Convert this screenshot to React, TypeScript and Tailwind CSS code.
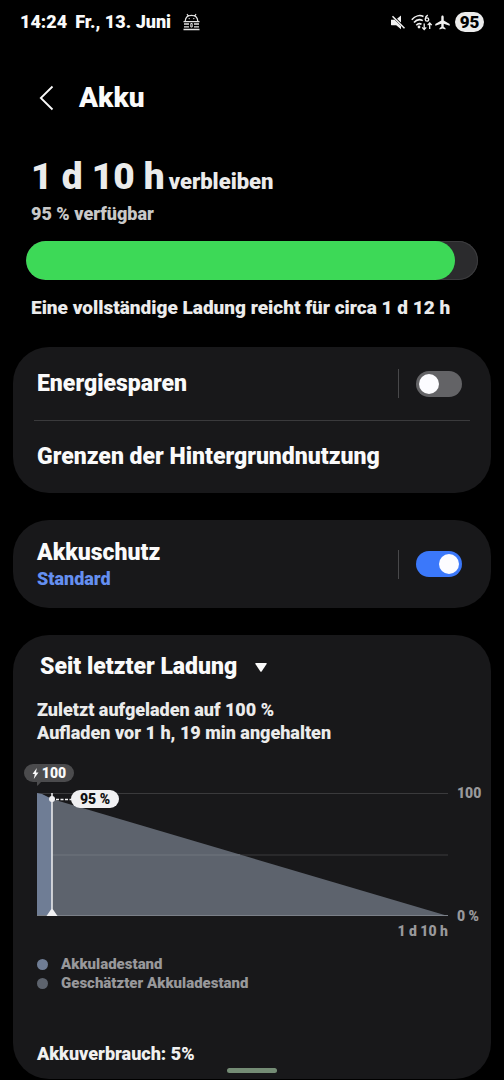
import { useState } from 'react';

type ToggleProps = {
  label: string;
  checked: boolean;
  onChange: (value: boolean) => void;
};

function Toggle({ label, checked, onChange }: ToggleProps) {
  return (
    <div className="flex items-center gap-[17px]">
      <span className="h-[29px] w-px bg-[#48484a]" />
      <label className="relative block h-[26px] w-[46px]">
        <input
          type="checkbox"
          role="switch"
          aria-label={label}
          checked={checked}
          onChange={(e) => onChange(e.target.checked)}
          className="peer block h-full w-full cursor-pointer appearance-none rounded-full bg-[#636366] checked:bg-[#3b78fa]"
        />
        <span className="pointer-events-none absolute left-[3px] top-[3px] h-5 w-5 rounded-full bg-[#fcfcff] peer-checked:left-[23px]" />
      </label>
    </div>
  );
}

function StatusBar() {
  return (
    <div className="flex h-11 items-center justify-between px-5 text-lg leading-5">
      <div className="flex items-center">
        <span>14:24</span>
        <span className="ml-2">Fr., 13. Juni</span>
        <svg className="ml-3" width="17" height="18" viewBox="0 0 17 18" fill="none" stroke="#e4e4e4">
          <path d="M2.2 8C2.5 4.2 5 2.3 8.500 2.300S14.500 4.200 14.800 8M4 1.200l1.200 1.800M13 1.200l-1.200 1.800" strokeWidth="1.200" />
          <path d="M.5 8.700h16M.5 16.500h16M1 11h5M11 11h5M1 13.800h5M11 13.800h5" strokeWidth="1.300" />
          <path d="M7.800 10.500h1.400v3.500H7.800z" strokeWidth="1" />
          <circle cx="6.200" cy="5.600" r=".7" fill="#e4e4e4" stroke="none" />
          <circle cx="10.800" cy="5.600" r=".7" fill="#e4e4e4" stroke="none" />
        </svg>
      </div>
      <div className="flex items-center">
        <svg width="14" height="15" viewBox="0 0 14 15" fill="#f2f2f2">
          <path d="M0 4.800h3.500L10 11v3.200L5.200 10.300H.5C.2 10.300 0 10.100 0 9.800zM10 .6v7L6 3.800z" />
          <path d="M1.500 1.200l12 12" stroke="#f2f2f2" strokeWidth="1.500" />
        </svg>
        <svg className="ml-[6px]" width="22" height="17" viewBox="0 0 22 17" fill="none" stroke="#f2f2f2" strokeWidth="1.600">
          <path d="M.8 5.700C4.200 1.600 9 .8 12.500 2.500M3 8.600c2.500-3 6-3.500 8.800-2M5.300 11.200c1.600-1.700 3.400-1.900 5.200-1" />
          <circle cx="8" cy="13" r="1.400" fill="#f2f2f2" stroke="none" />
          <path d="M16.800 1.200c-1.600.8-2.500 2.200-2.500 4" strokeWidth="1.300" />
          <circle cx="16" cy="5.500" r="1.700" strokeWidth="1.300" />
          <path d="M13.200 9.500v6M11.200 13.400l2 2.200 2-2.200M18.700 15V9M16.700 11.100l2-2.200 2 2.200" strokeWidth="1.300" />
        </svg>
        <svg className="ml-[2px]" width="15" height="15" viewBox="0 0 15 15" fill="#f2f2f2">
          <path d="M7.500.4c.8 0 1.200.6 1.200 1.500v3.500l6 3.700v1.600l-6-1.900v3l1.800 1.400v1.200l-3-.8-3 .8v-1.200l1.800-1.400v-3l-6 1.900V9.100l6-3.700V1.900c0-.9.400-1.500 1.200-1.500z" />
        </svg>
        <span className="ml-[5px] flex h-5 w-[29px] items-center justify-center rounded-full bg-[#ececec] text-[17px] leading-5 text-black">
          95
        </span>
      </div>
    </div>
  );
}

function BatteryChart() {
  return (
    <div className="mt-[49px] grid grid-cols-[1fr_43px]">
      <div className="relative h-[123px]">
        <svg className="block h-full w-full overflow-visible" viewBox="0 0 411 123" preserveAspectRatio="none">
          <path d="M0 .5h411M0 62h411" stroke="#3a3a3c" />
          <path d="M15 6L411 123H15z" fill="#5d636d" />
          <path d="M0 0L5 1 15 6V123H0z" fill="#6f7d95" />
          <path d="M15 62h188" stroke="#71767e" />
          <path d="M0 122.500h411" stroke="#7b8088" />
        </svg>
        <div className="absolute left-[3.65%] top-0 h-full">
          <svg className="block overflow-visible" width="20" height="123" viewBox="0 0 20 123">
            <path d="M0 0V123" stroke="#f0f0f2" strokeWidth="1.500" />
            <path d="M-5.500 123L-1 116.500Q0 115.500 1 116.500L5.500 123z" fill="#f0f0f2" />
            <circle cx="0" cy="6" r="3" fill="#f0f0f2" />
            <path d="M4 6.500H20" stroke="#f0f0f2" strokeWidth="1.500" strokeDasharray="3 1.500" />
          </svg>
          <span className="absolute left-[19px] top-[-3px] flex h-[18px] w-12 items-center justify-center whitespace-nowrap rounded-full bg-[#f0f0f2] text-sm leading-[18px] text-[#111]">
            95 %
          </span>
        </div>
        <span className="absolute left-[-13px] top-[-29px] flex h-[18px] w-[50px] items-center justify-center gap-[3px] rounded-full bg-[#4b4b4d] text-sm leading-[18px]">
          <svg width="7" height="11" viewBox="0 0 6 11" fill="#fafafa">
            <path d="M4.300 0L0 6h2.300L1.300 11 6 4.500H3.500z" />
          </svg>
          100
        </span>
        <svg className="absolute left-0 top-[-12px]" width="5" height="5" viewBox="0 0 5 5" fill="#4b4b4d">
          <path d="M0 0h5L.8 4.500Q0 5 0 4z" />
        </svg>
      </div>
      <div className="-my-[10px] flex flex-col justify-between pl-[9px] text-sm leading-5 text-[#98989b]">
        <span>100</span>
        <span className="whitespace-nowrap">0 %</span>
      </div>
      <div className="mt-[5px] text-right text-sm leading-5 text-[#98989b]">1 d 10 h</div>
    </div>
  );
}

export default function App() {
  const [powerSaving, setPowerSaving] = useState(false);
  const [protection, setProtection] = useState(true);
  const level = 95;

  return (
    <div className="min-h-screen bg-black font-['Roboto','Liberation_Sans',sans-serif] font-black text-[#fafafa]">
      <StatusBar />

      <header className="flex h-[108px] items-center pl-[39px]">
        <button type="button" aria-label="Zurück" className="cursor-pointer">
          <svg className="block" width="16" height="26" viewBox="0 0 16 26" fill="none" stroke="#fafafa" strokeWidth="1.800">
            <path d="M13.500 1.500L1.800 13l11.700 11.500" />
          </svg>
        </button>
        <h1 className="ml-6 text-[28px] leading-8">Akku</h1>
      </header>

      <main className="px-[13px]">
        <section>
          <div className="px-[18px] text-[#ebebeb]">
            <p className="flex items-baseline gap-1 whitespace-nowrap">
              <span className="text-[37px] leading-[50px]">1 d 10 h</span>
              <span className="text-[22px] leading-6">verbleiben</span>
            </p>
            <p className="text-lg leading-6 text-[#c8c8c8]">{level} % verfügbar</p>
          </div>
          <div
            role="progressbar"
            aria-label="Akkuladestand"
            aria-valuenow={level}
            className="mx-[13px] mt-[15px] h-[39px] overflow-hidden rounded-full bg-[#2b2b2d] ring-1 ring-inset ring-[#3c3c3e]"
          >
            <div className="h-full rounded-full bg-[#3dd957]" style={{ width: `${level}%` }} />
          </div>
          <p className="mt-4 pl-[18px] text-[19px] leading-6 text-[#ebebeb]">
            Eine vollständige Ladung reicht für circa 1 d 12 h
          </p>
        </section>

        <section className="mt-[27px] rounded-[36px] bg-[#18181a] text-[23px] leading-7">
          <div className="flex h-[73px] items-center justify-between pl-6 pr-[29px]">
            <h2>Energiesparen</h2>
            <Toggle label="Energiesparen" checked={powerSaving} onChange={setPowerSaving} />
          </div>
          <hr className="mx-[21px] border-[#3a3a3c]" />
          <a href="#hintergrund" className="flex h-[72px] items-center px-6">
            Grenzen der Hintergrundnutzung
          </a>
        </section>

        <section className="mt-[27px] flex h-[88px] items-center justify-between rounded-[36px] bg-[#18181a] pl-6 pr-[29px]">
          <div className="pt-[2px]">
            <h2 className="text-[23px] leading-7">Akkuschutz</h2>
            <p className="text-lg leading-6 text-[#648ff0]">Standard</p>
          </div>
          <Toggle label="Akkuschutz" checked={protection} onChange={setProtection} />
        </section>

        <section className="mt-[27px] rounded-[36px] bg-[#18181a] pb-[13px] pt-[18px]">
          <div className="flex items-center gap-[18px] pl-[27px]">
            <select
              aria-label="Zeitraum"
              className="field-sizing-content cursor-pointer appearance-none bg-transparent text-[23px] leading-7"
            >
              <option>Seit letzter Ladung</option>
            </select>
            <svg width="12" height="9" viewBox="0 0 12 9" fill="#fafafa">
              <path d="M.8 0h10.400q1 0 .4 1L6.800 8.200q-.8 1-1.600 0L.4 1q-.6-1 .4-1z" />
            </svg>
          </div>

          <div className="pl-6">
            <p className="mt-[17px] text-lg leading-[23px] text-[#ebebeb]">
              Zuletzt aufgeladen auf 100 %<br />
              Aufladen vor 1 h, 19 min angehalten
            </p>

            <BatteryChart />

            <ul className="mt-[14px] text-[15px] leading-[19px] text-[#98989b]">
              <li className="flex items-center gap-[13px]">
                <span className="h-[11px] w-[11px] rounded-full bg-[#6f7d95]" />
                Akkuladestand
              </li>
              <li className="flex items-center gap-[13px]">
                <span className="h-[11px] w-[11px] rounded-full bg-[#5d636d]" />
                Geschätzter Akkuladestand
              </li>
            </ul>

            <p className="mt-[49px] text-lg leading-6 text-[#f0f0f0]">Akkuverbrauch: 5%</p>
          </div>
        </section>
      </main>

      {/* gesture handle */}
      <div className="fixed bottom-[7px] left-1/2 h-[5px] w-[50px] -translate-x-1/2 rounded-full bg-[#748c75]" />
    </div>
  );
}
